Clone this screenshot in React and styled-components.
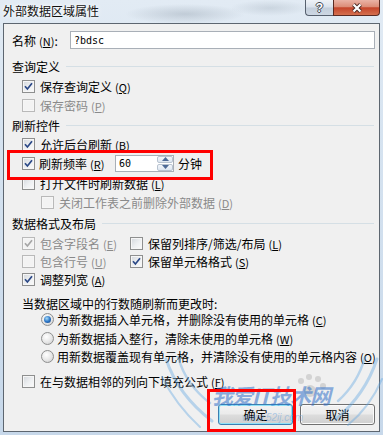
import React from 'react';
import styled, { createGlobalStyle } from 'styled-components';

const GlobalStyle = createGlobalStyle`
  html, body { margin: 0; padding: 0; }
  body {
    width: 383px;
    height: 435px;
    overflow: hidden;
    background: #cbd9e8;
    font-family: "Noto Sans CJK SC", "Noto Sans", sans-serif;
    font-size: 12px;
    color: #000;
  }
`;

const Window = styled.div`
  position: relative;
  width: 383px;
  height: 435px;
  box-sizing: border-box;
  display: flex;
  flex-direction: column;
  padding: 0 3px 3px 3px;
  background:
    radial-gradient(ellipse 60px 10px at 185px 14px, rgba(110, 125, 140, 0.28), transparent),
    radial-gradient(ellipse 40px 8px at 270px 8px, rgba(120, 135, 150, 0.22), transparent),
    linear-gradient(180deg, #e2ebf4 0%, #d6e3f0 30%, #c7d8ea 100%);
`;

const TitleBar = styled.div`
  height: 23px;
  flex: none;
  display: flex;
  justify-content: space-between;
  align-items: flex-start;
`;

const Title = styled.div`
  padding-top: 4px;
  line-height: 14px;
  font-size: 12px;
  color: #111;
  text-shadow: 0 0 6px #fff, 0 0 3px #fff;
`;

const Caption = styled.div`
  display: flex;
`;

const HelpBtn = styled.div`
  width: 28px;
  height: 16px;
  box-sizing: border-box;
  border: 1px solid #56606e;
  border-top: none;
  border-right: none;
  border-bottom-left-radius: 4px;
  display: flex;
  align-items: center;
  justify-content: center;
  background: linear-gradient(180deg, #eef2f7 0%, #d9e1eb 48%, #c3cedb 52%, #cdd7e3 100%);
  font-family: "Liberation Sans", sans-serif;
  font-weight: bold;
  font-size: 12px;
  color: #fff;
  text-shadow: -1px 0 #3d4652, 1px 0 #3d4652, 0 -1px #3d4652, 0 1px #3d4652;
`;

const CloseBtn = styled.div`
  width: 47px;
  height: 16px;
  box-sizing: border-box;
  border: 1px solid #5a2a22;
  border-top: none;
  border-bottom-right-radius: 4px;
  display: flex;
  align-items: center;
  justify-content: center;
  background: linear-gradient(180deg, #eab3a6 0%, #dc8d78 45%, #c5452b 52%, #d4704f 100%);
`;

const Content = styled.div`
  flex: 1;
  border: 1px solid #5d6670;
  background: #f0f0f0;
  padding: 7px 4px 0 4px;
  display: flex;
  flex-direction: column;
`;

const NameRow = styled.div`
  display: flex;
  align-items: center;
  height: 18px;
  padding-left: 4px;
`;

const NameLabel = styled.span`
  width: 58px;
  flex: none;
`;

const TextBox = styled.div`
  width: 308px;
  height: 18px;
  box-sizing: border-box;
  border: 1px solid #a9afb7;
  background: #fff;
  display: flex;
  align-items: center;
  padding-left: 3px;
  font-family: "DejaVu Sans Mono", monospace;
  font-size: 10px;
`;

const SectionHeader = styled.div`
  display: flex;
  align-items: center;
  height: 16px;
  margin-top: ${(p) => p.$mt}px;
  padding-left: 4px;
  padding-right: 1px;

  &::after {
    content: '';
    flex: 1;
    height: 1px;
    margin-left: 6px;
    background: #d5dfe5;
  }
`;

const Item = styled.div`
  display: flex;
  align-items: center;
  gap: ${(p) => p.$gap ?? 5}px;
  height: 16px;
  margin-top: ${(p) => p.$mt}px;
  padding-left: ${(p) => p.$indent}px;
  color: ${(p) => (p.$disabled ? '#8a8a8a' : '#000')};
  white-space: nowrap;
`;

const TwoCol = styled.div`
  display: grid;
  grid-template-columns: 108px 1fr;
  height: 16px;
  margin-top: ${(p) => p.$mt}px;
  padding-left: 14px;
`;

const Cell = styled.div`
  display: flex;
  align-items: center;
  gap: 5px;
  color: ${(p) => (p.$disabled ? '#8a8a8a' : '#000')};
  white-space: nowrap;
`;

const Box = styled.span`
  flex: none;
  width: 13px;
  height: 13px;
  box-sizing: border-box;
  border: 1px solid ${(p) => (p.$disabled ? '#b9b9b9' : '#8e8f8f')};
  box-shadow: inset 0 0 0 1px #f6f6f6;
  background: ${(p) =>
    p.$disabled ? '#f3f3f3' : 'linear-gradient(135deg, #d3d7dc 0%, #eef0f2 55%, #fbfbfb 100%)'};
  display: flex;
  align-items: center;
  justify-content: center;
`;

const RadioDot = styled.span`
  flex: none;
  width: 13px;
  height: 13px;
  box-sizing: border-box;
  border-radius: 50%;
  border: 1px solid #8e8f8f;
  background: radial-gradient(circle at 40% 35%, #ffffff 0%, #e6e6e6 55%, #c8c8c8 100%);
  display: flex;
  align-items: center;
  justify-content: center;

  &::after {
    content: '';
    display: ${(p) => (p.$checked ? 'block' : 'none')};
    width: 7px;
    height: 7px;
    border-radius: 50%;
    background: radial-gradient(circle at 40% 35%, #a8dcf8 0%, #2f79c8 50%, #123f80 100%);
  }
`;

const Key = styled.span`
  margin-left: 3px;
  font-size: 11px;
`;

const FreqLabel = styled.span`
  width: 72px;
  flex: none;
`;

const SpinBox = styled.div`
  display: flex;
  height: 17px;
  box-sizing: border-box;
  border: 1px solid #a9afb7;
  background: #fff;
`;

const SpinValue = styled.div`
  width: 40px;
  display: flex;
  align-items: center;
  padding-left: 3px;
  box-sizing: border-box;
  font-family: "DejaVu Sans Mono", monospace;
  font-size: 10px;
`;

const Spinner = styled.div`
  width: 16px;
  display: flex;
  flex-direction: column;
  gap: 1px;
  padding: 0 0 0 1px;
`;

const SpinArrow = styled.div`
  flex: 1;
  display: flex;
  align-items: center;
  justify-content: center;
  border: 1px solid #b8c3d0;
  border-radius: 2px;
  background: linear-gradient(180deg, #f4f7fb 0%, #dde6f1 100%);
`;

const Note = styled.div`
  height: 16px;
  display: flex;
  align-items: center;
  margin-top: ${(p) => p.$mt}px;
  padding-left: 14px;
`;

const ButtonRow = styled.div`
  display: flex;
  justify-content: flex-end;
  gap: 7px;
  margin-top: 15px;
`;

const Button = styled.div`
  width: 75px;
  height: 21px;
  box-sizing: border-box;
  border: 1px solid ${(p) => (p.$primary ? '#3c7fb1' : '#707070')};
  border-radius: 3px;
  display: flex;
  align-items: center;
  justify-content: center;
  box-shadow: inset 0 0 0 1px ${(p) => (p.$primary ? '#8fe1f7' : '#fbfbfb')};
  background: linear-gradient(180deg, #f3f3f3 0%, #ebebeb 48%, #dddddd 52%, #cfcfcf 100%);
`;

const RedBox = styled.div`
  position: absolute;
  left: ${(p) => p.$x}px;
  top: ${(p) => p.$y}px;
  width: ${(p) => p.$w}px;
  height: ${(p) => p.$h}px;
  box-sizing: border-box;
  border: 3px solid #ff0000;
  pointer-events: none;
`;

const Watermark = styled.div`
  position: absolute;
  left: 160px;
  top: 355px;
  width: 223px;
  height: 78px;
  pointer-events: none;
`;

const WaterLogo = styled.div`
  position: absolute;
  left: 52px;
  top: 28px;
  font-size: 21px;
  font-weight: bold;
  font-style: italic;
  letter-spacing: -1px;
  line-height: 24px;
  color: rgba(45, 110, 200, 0.55);
`;

const WaterUrl = styled.div`
  position: absolute;
  left: 82px;
  top: 57px;
  font-family: "Liberation Sans", sans-serif;
  font-size: 10px;
  font-style: italic;
  color: rgba(110, 165, 220, 0.5);
`;

const Check = ({ checked, disabled }) => (
  <Box $disabled={disabled}>
    {checked && (
      <svg width="11" height="11" viewBox="0 0 11 11">
        <path
          d="M2 5.3 L4.4 8 L9 2.2"
          fill="none"
          stroke={disabled ? '#a6a6a6' : '#2b4886'}
          strokeWidth="1.7"
        />
      </svg>
    )}
  </Box>
);

const K = ({ k }) => (
  <Key>
    (<u>{k}</u>)
  </Key>
);

const Arrow = ({ up }) => (
  <svg width="7" height="4" viewBox="0 0 7 4">
    <path d={up ? 'M0 4 L3.5 0 L7 4Z' : 'M0 0 L3.5 4 L7 0Z'} fill="#4d6a96" />
  </svg>
);

export default function App() {
  return (
    <>
      <GlobalStyle />
      <Window>
        <TitleBar>
          <Title>外部数据区域属性</Title>
          <Caption>
            <HelpBtn>?</HelpBtn>
            <CloseBtn>
              <svg width="14" height="10" viewBox="0 0 14 10">
                <path d="M3.5 1.5 L10.5 8.5 M10.5 1.5 L3.5 8.5" stroke="#4a2a24" strokeWidth="4" />
                <path d="M3.5 1.5 L10.5 8.5 M10.5 1.5 L3.5 8.5" stroke="#fff" strokeWidth="2.2" />
              </svg>
            </CloseBtn>
          </Caption>
        </TitleBar>

        <Content>
          <NameRow>
            <NameLabel>
              名称<K k="N" />:
            </NameLabel>
            <TextBox>?bdsc</TextBox>
          </NameRow>

          <SectionHeader $mt={9}>查询定义</SectionHeader>
          <Item $indent={14} $mt={4}>
            <Check checked />
            <span>保存查询定义<K k="Q" /></span>
          </Item>
          <Item $indent={14} $mt={3} $disabled>
            <Check disabled />
            <span>保存密码<K k="P" /></span>
          </Item>

          <SectionHeader $mt={4}>刷新控件</SectionHeader>
          <Item $indent={14} $mt={3}>
            <Check checked />
            <span>允许后台刷新<K k="B" /></span>
          </Item>
          <Item $indent={14} $mt={3} $gap={4}>
            <Check checked />
            <FreqLabel>刷新频率<K k="R" /></FreqLabel>
            <SpinBox>
              <SpinValue>60</SpinValue>
              <Spinner>
                <SpinArrow>
                  <Arrow up />
                </SpinArrow>
                <SpinArrow>
                  <Arrow />
                </SpinArrow>
              </Spinner>
            </SpinBox>
            <span>分钟</span>
          </Item>
          <Item $indent={14} $mt={4}>
            <Check />
            <span>打开文件时刷新数据<K k="L" /></span>
          </Item>
          <Item $indent={33} $mt={3} $disabled>
            <Check disabled />
            <span>关闭工作表之前删除外部数据<K k="D" /></span>
          </Item>

          <SectionHeader $mt={5}>数据格式及布局</SectionHeader>
          <TwoCol $mt={4}>
            <Cell $disabled>
              <Check checked disabled />
              <span>包含字段名<K k="E" /></span>
            </Cell>
            <Cell>
              <Check />
              <span>保留列排序/筛选/布局<K k="L" /></span>
            </Cell>
          </TwoCol>
          <TwoCol $mt={2}>
            <Cell $disabled>
              <Check disabled />
              <span>包含行号<K k="U" /></span>
            </Cell>
            <Cell>
              <Check checked />
              <span>保留单元格格式<K k="S" /></span>
            </Cell>
          </TwoCol>
          <Item $indent={14} $mt={2}>
            <Check checked />
            <span>调整列宽<K k="A" /></span>
          </Item>

          <Note $mt={8}>当数据区域中的行数随刷新而更改时:</Note>
          <Item $indent={33} $mt={0} $gap={3}>
            <RadioDot $checked />
            <span>为新数据插入单元格，并删除没有使用的单元格<K k="C" /></span>
          </Item>
          <Item $indent={33} $mt={3} $gap={3}>
            <RadioDot />
            <span>为新数据插入整行，清除未使用的单元格<K k="W" /></span>
          </Item>
          <Item $indent={33} $mt={2} $gap={3}>
            <RadioDot />
            <span>用新数据覆盖现有单元格，并清除没有使用的单元格内容<K k="O" /></span>
          </Item>

          <Item $indent={14} $mt={9}>
            <Check />
            <span>在与数据相邻的列向下填充公式<K k="F" /></span>
          </Item>

          <ButtonRow>
            <Button $primary>确定</Button>
            <Button>取消</Button>
          </ButtonRow>
        </Content>

        <Watermark>
          <svg width="223" height="78" viewBox="0 0 223 78">
            <g fill="none" stroke="rgba(95,165,225,0.4)" strokeLinecap="round">
              <path d="M6 4 Q18 40 52 66" strokeWidth="3" />
              <path d="M18 2 Q26 30 50 48" strokeWidth="2.5" />
              <path d="M2 22 Q16 50 40 72" strokeWidth="2" />
              <path d="M217 4 Q205 40 176 64" strokeWidth="3" />
              <path d="M205 2 Q198 28 178 46" strokeWidth="2.5" />
              <path d="M222 24 Q210 52 188 70" strokeWidth="2" />
            </g>
            <g fill="rgba(175,175,175,0.45)">
              <circle cx="150" cy="36" r="6" />
              <circle cx="141" cy="26" r="3" />
              <circle cx="149" cy="22" r="3" />
              <circle cx="158" cy="24" r="3" />
              <circle cx="163" cy="31" r="3" />
            </g>
          </svg>
          <WaterLogo>我爱IT技术网</WaterLogo>
          <WaterUrl>www.52ij.com</WaterUrl>
        </Watermark>

        <RedBox $x={7} $y={150} $w={206} $h={30} />
        <RedBox $x={207} $y={389} $w={89} $h={43} />
      </Window>
    </>
  );
}
